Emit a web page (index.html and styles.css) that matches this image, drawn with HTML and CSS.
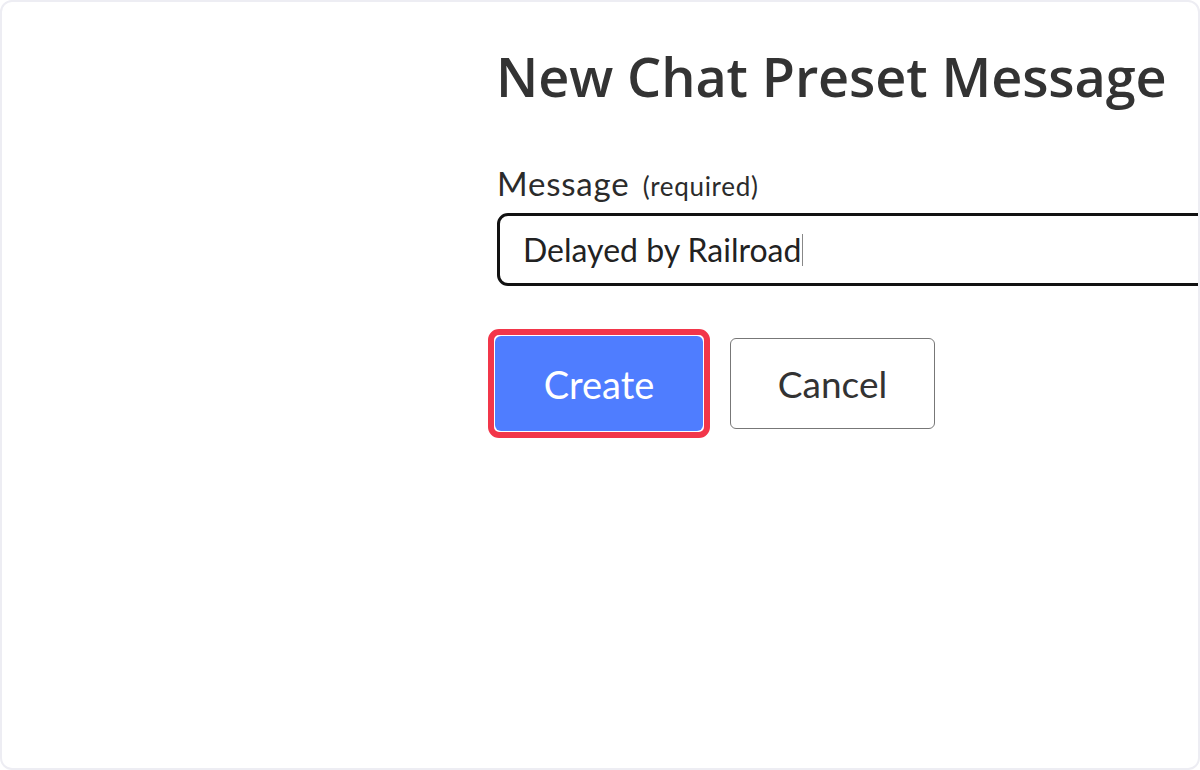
FILE: index.html
```html
<!DOCTYPE html>
<html lang="en">
<head>
  <meta charset="UTF-8" />
  <title>New Chat Preset Message</title>
  <link rel="stylesheet" href="styles.css">
</head>
<body>
  <div class="card">
    <div class="form">
      <h1>New Chat Preset Message</h1>

      <label class="field-label" for="message">Message <span class="hint">(required)</span></label>
      <div class="input-box">
        <span class="input-text">Delayed by Railroad</span><span class="caret"></span>
      </div>

      <div class="actions">
        <div class="highlight">
          <button class="btn btn-primary">Create</button>
        </div>
        <button class="btn btn-secondary">Cancel</button>
      </div>
    </div>
  </div>
</body>
</html>
```

FILE: styles.css
```css
body {
  margin: 0;
  background: #fff;
  font-family: 'Lato', 'Open Sans', sans-serif;
  color: #2b2b2b;
}

.card {
  box-sizing: border-box;
  height: 770px;
  border: 2px solid #ededf3;
  border-radius: 12px;
  overflow: hidden;
  padding: 39px 0 0 495px;
}

.form {
  width: 760px;
}

h1 {
  margin: 0 0 54px -1px;
  font-family: 'Open Sans', 'Lato', sans-serif;
  font-size: 54px;
  font-weight: 600;
  line-height: 70px;
  letter-spacing: -0.1px;
  color: #333;
}

.field-label {
  display: block;
  font-size: 33px;
  line-height: 36px;
  letter-spacing: 0.8px;
  color: #2b2b2b;
  margin-bottom: 9px;
}

.hint {
  font-size: 26px;
  letter-spacing: 0.7px;
  margin-left: 4px;
}

.input-box {
  box-sizing: border-box;
  height: 73px;
  border: 3px solid #111;
  border-radius: 11px;
  padding: 0 0 0 23px;
  display: flex;
  align-items: center;
  font-size: 32px;
  color: #222;
}

.caret {
  display: inline-block;
  width: 1px;
  height: 32px;
  background: #888;
  margin-left: 1px;
}

.actions {
  display: flex;
  align-items: center;
  gap: 20px;
  margin-top: 43px;
  margin-left: -9px;
}

.highlight {
  border: 6px solid #f2364a;
  border-radius: 11px;
  padding: 1px;
  background: #fff;
}

.btn {
  font-family: 'Lato', 'Open Sans', sans-serif;
  border-radius: 6px;
  cursor: pointer;
  display: block;
}

.btn-primary {
  width: 208px;
  height: 95px;
  font-size: 38px;
  background: #4f7dff;
  color: #fff;
  border: none;
}

.btn-secondary {
  width: 205px;
  height: 91px;
  font-size: 37px;
  background: #fff;
  color: #333;
  border: 1.5px solid #777;
}
```
